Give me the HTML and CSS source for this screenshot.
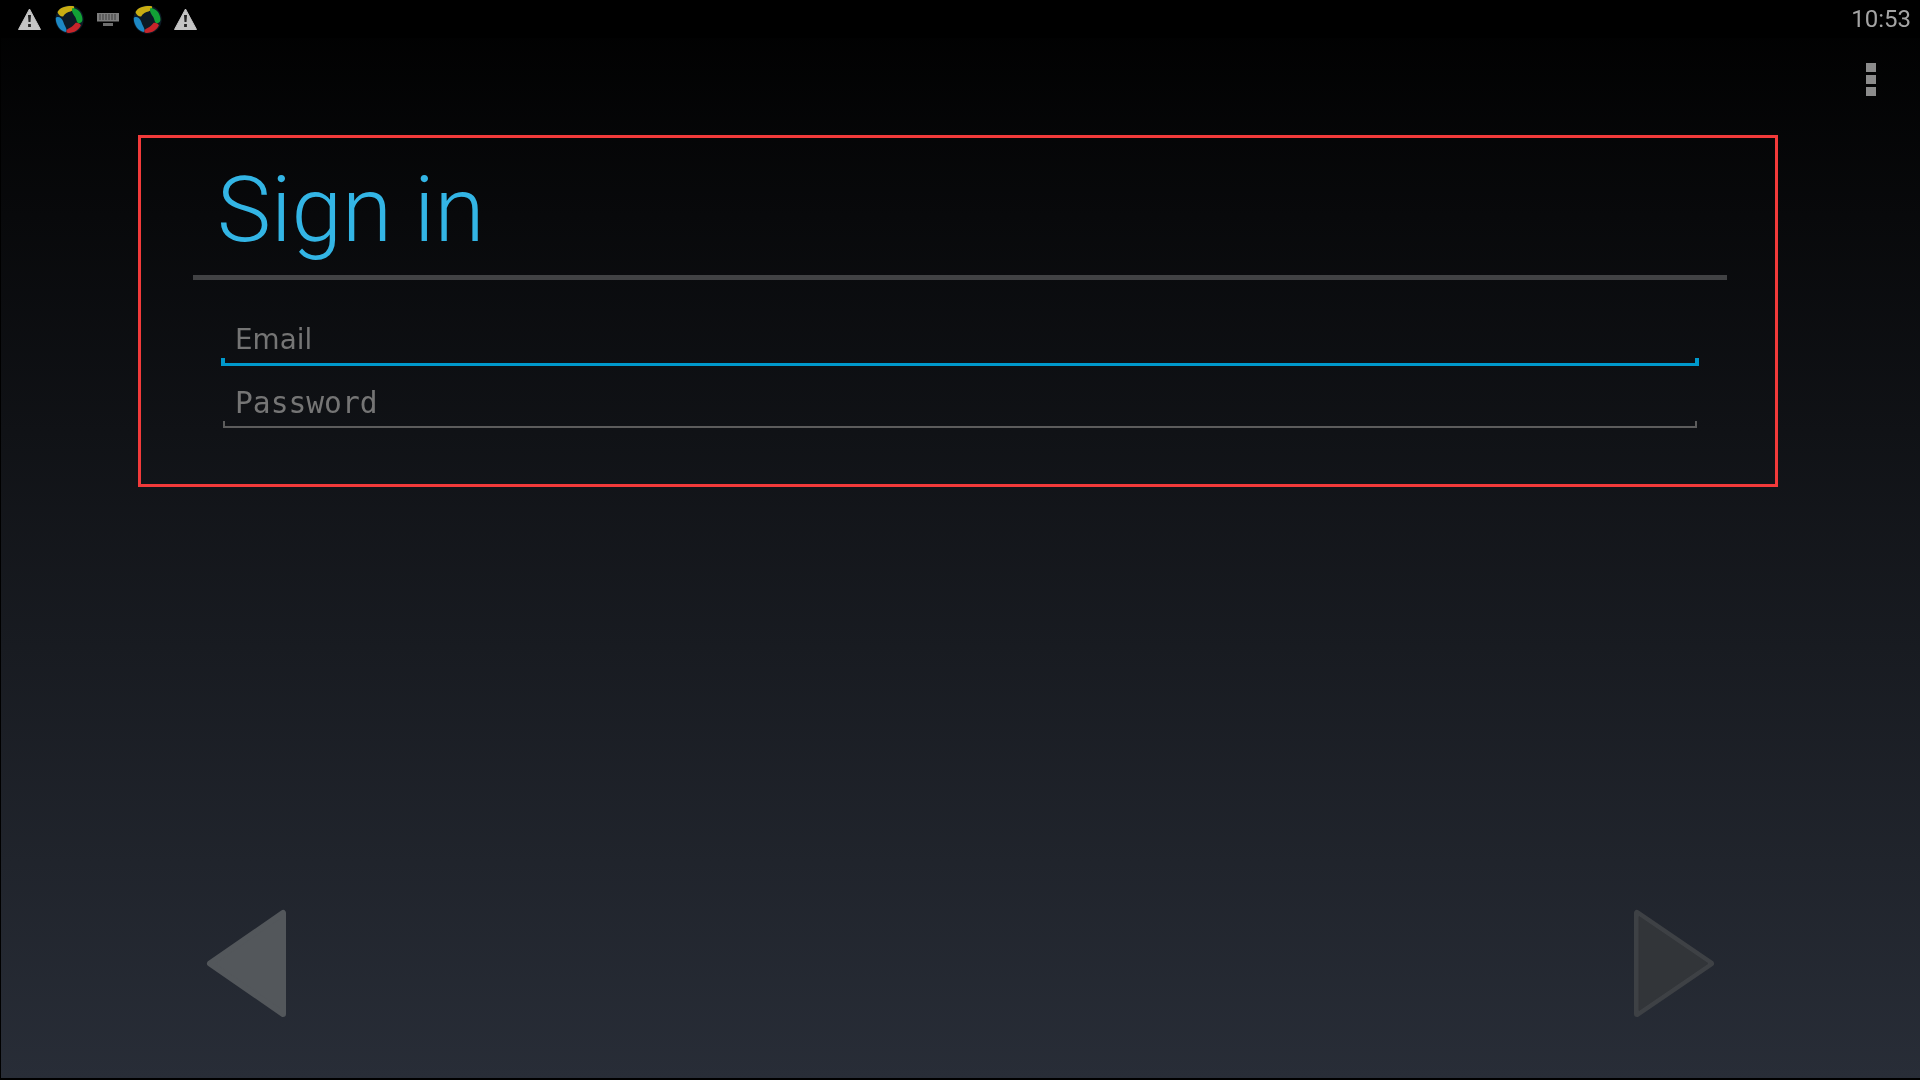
FILE: index.html
```html
<!DOCTYPE html>
<html lang="en">
<head>
<meta charset="utf-8">
<title>Sign in</title>
<link rel="stylesheet" href="styles.css">
</head>
<body>
<svg class="defs" width="0" height="0">
  <defs>
    <g id="app">
      <circle cx="15" cy="15" r="14.6" fill="#0c1a26"/>
      <path fill="#c9ad12" d="M19.5 1.2 C14 0.6 5.5 1.6 2.6 7.2 C3.2 10 6.2 12.2 8.4 11.8 C10 8.6 13.5 7.2 16 6.6 C19 5.6 20.6 3.4 19.5 1.2Z"/>
      <path fill="#12a136" d="M18 3.2 C23.5 3.4 28 8.2 28.4 14.6 C28.6 17.4 26.6 19.4 24.2 18.8 C22 17.8 22.4 14 20.4 11.6 C19 9.8 16.6 6.4 18 3.2Z"/>
      <path fill="#1d88c4" d="M0.8 13.6 C1.4 12.2 4.4 12.2 6 13.4 C8.6 15.4 8.8 19 10.4 21.6 C11.6 23.8 12.8 26.4 11.4 28 C5.8 27.2 0.6 20.4 0.8 13.6Z"/>
      <path fill="#c7252a" d="M21.4 18.4 C23.4 17.8 26.4 19.4 26.8 21 C25 26 19 29.4 12.6 28.8 C10.6 27 12.4 24.8 15 23.8 C17.8 22.8 19.6 20.6 21.4 18.4Z"/>
    </g>
  </defs>
</svg>
<div class="screen">
  <header class="status">
    <div class="status-icons">
      <svg class="ic-warn" viewBox="0 0 24 24"><path fill="#c4c4c4" stroke="#c4c4c4" stroke-linejoin="round" d="M12 2 L23 22.5 H1 Z"/><path fill="#222" d="M10.5 8 L11 15 H13 L13.5 8 Z M10.6 17 V20 H13.4 V17 Z"/></svg>
      <svg class="ic-app" viewBox="0 0 30 30"><use href="#app"/></svg>
      <svg class="ic-kbd" viewBox="0 0 22 13"><path fill="#7e7e7e" d="M0 0H22V8.5H0Z"/><path fill="#3c3c3c" d="M2.5 1h1v6h-1zM5.5 1h1v6h-1zM8.5 1h1v6h-1zM11.5 1h1v6h-1zM14.5 1h1v6h-1zM17.5 1h1v6h-1z"/><path fill="#6e6e6e" d="M6 10H16V13H6Z"/></svg>
      <svg class="ic-app ic-app-last" viewBox="0 0 30 30"><use href="#app"/></svg>
      <svg class="ic-warn ic-warn-last" viewBox="0 0 24 24"><path fill="#c4c4c4" stroke="#c4c4c4" stroke-linejoin="round" d="M12 2 L23 22.5 H1 Z"/><path fill="#222" d="M10.5 8 L11 15 H13 L13.5 8 Z M10.6 17 V20 H13.4 V17 Z"/></svg>
    </div>
    <time class="clock">10:53</time>
  </header>

  <div class="action-row">
    <div class="overflow"><span></span><span></span><span></span></div>
  </div>

  <main class="content">
    <section class="card">
      <h1 class="title">Sign in</h1>
      <div class="rule"></div>
      <div class="fields">
        <div class="field field-active"><span class="label-sans">Email</span></div>
        <div class="field"><span class="label-mono">Password</span></div>
      </div>
    </section>
  </main>

  <footer class="nav">
    <svg class="arrow" viewBox="0 0 84 112"><path fill="#53575b" stroke="#53575b" stroke-width="6" stroke-linejoin="round" d="M4 57.5 L77 7 V108 Z"/></svg>
    <svg class="arrow" viewBox="0 0 84 112"><path fill="#3e4145" stroke="#3e4145" stroke-width="6" stroke-linejoin="round" d="M80 57.5 L6 7 V108 Z"/><path fill="#323539" stroke="#323539" stroke-width="1" stroke-linejoin="round" d="M77 57.5 L8 10.5 V104.5 Z"/></svg>
  </footer>
</div>
</body>
</html>
```
FILE: styles.css
```css
* { box-sizing: border-box; }
html, body { margin: 0; height: 100%; }
body { background: #000; overflow: hidden; }
.defs { position: absolute; }

.screen {
  width: 1920px;
  height: 1080px;
  display: flex;
  flex-direction: column;
  background: linear-gradient(#000 0, #282d37 100%);
  border-left: 1px solid #000;
  border-bottom: 2px solid #000;
  font-family: Roboto, sans-serif;
}

.status {
  height: 38px;
  display: flex;
  justify-content: space-between;
  align-items: flex-start;
  padding: 0 9px 0 16px;
  background: #000;
}
.status-icons { display: flex; align-items: center; height: 38px; gap: 13px; }
.status-icons svg { filter: blur(0.5px); display: block; }
.ic-warn { width: 25px; height: 24px; }
.ic-warn-last { margin-left: -2px; }
.ic-app { width: 29px; height: 29px; }
.ic-app-last { margin-left: 1px; }
.ic-kbd { width: 22px; height: 13px; }
.clock { color: #a4a4a4; font-size: 24px; line-height: 38px; filter: blur(0.4px); }

.action-row {
  height: 97px;
  display: flex;
  justify-content: flex-end;
  padding: 25px 44px 0 0;
}
.overflow { display: flex; flex-direction: column; gap: 3px; }
.overflow span { width: 10px; height: 9px; background: #8c8c8c; }

.content { flex: 1; padding-left: 137px; }

.card {
  width: 1640px;
  height: 352px;
  border: 3px solid #f23a3a;
  padding: 0 48px 0 52px;
}
.title {
  margin: 0;
  height: 137px;
  padding: 8px 0 0 24px;
  font-weight: 300;
  font-size: 91px;
  line-height: 129px;
  color: #33b5e5;
  filter: blur(0.4px);
}
.rule { height: 5px; background: #414244; }
.fields { padding: 0 30px; }
.field {
  position: relative;
  height: 62px;
  padding: 0 0 1px 12px;
  border-bottom: 2px solid #5c5c5c;
  color: #757575;
  font-size: 29.6px;
  line-height: 44px;
  display: flex;
  align-items: flex-end;
}
.field::before, .field::after {
  content: "";
  position: absolute;
  bottom: 0;
  width: 2px;
  height: 5px;
  background: #5c5c5c;
}
.field::before { left: 0; }
.field::after { right: 0; }
.field-active { height: 86px; padding: 0 0 1px 14px; border-bottom: 3px solid #0099cc; margin: 0 -2px; }
.field-active::before, .field-active::after { width: 4px; background: #0099cc; }
.label-sans, .label-mono { filter: blur(0.4px); }
.label-sans { font-family: "DejaVu Sans", sans-serif; font-size: 27.8px; }
.label-mono { font-family: "DejaVu Sans Mono", monospace; }

.nav {
  display: flex;
  justify-content: space-between;
  padding: 0 205px 60px 205px;
}
.arrow { width: 84px; height: 112px; display: block; }
```
